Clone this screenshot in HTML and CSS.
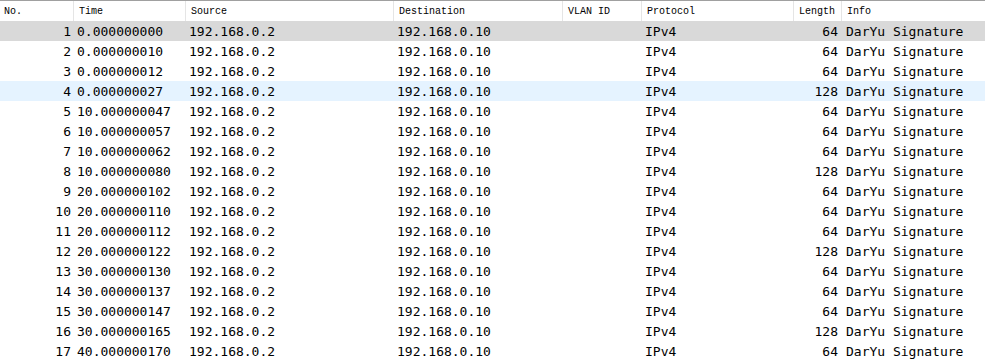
FILE: index.html
```html
<!DOCTYPE html>
<html lang="en">
<head>
    <meta charset="UTF-8">
    <title>Packet List</title>
    <link rel="stylesheet" href="styles.css">
</head>
<body>
    <div class="packet-list">
        <div class="row header">
            <div class="cell">No.</div>
            <div class="cell">Time</div>
            <div class="cell">Source</div>
            <div class="cell">Destination</div>
            <div class="cell">VLAN ID</div>
            <div class="cell">Protocol</div>
            <div class="cell">Length</div>
            <div class="cell">Info</div>
        </div>
        <div id="rows"></div>
    </div>
    <script src="app.js"></script>
</body>
</html>
```

FILE: styles.css
```css
body {
    margin: 0;
    background: #fff;
    color: #000;
}

.packet-list {
    width: 985px;
}

.row {
    display: grid;
    grid-template-columns: 73px 112px 208px 169px 79px 152px 48px 1fr;
    height: 20px;
    align-items: center;
    font-family: "DejaVu Sans Mono", "Liberation Mono", monospace;
    font-size: 13px;
    white-space: nowrap;
}

.row .cell {
    padding-left: 4px;
    overflow: hidden;
}

.row .num {
    text-align: right;
    padding-left: 0;
    padding-right: 2px;
}

.row .len {
    text-align: right;
    padding-left: 0;
    padding-right: 3px;
}

.row .info {
    padding-left: 5px;
}

.header {
    border-top: 1px solid #a0a0a0;
    height: 20px;
    align-items: stretch;
    font-family: "Liberation Mono", "DejaVu Sans Mono", monospace;
    font-size: 10px;
}

.header .cell {
    display: flex;
    align-items: center;
    padding-left: 5px;
    border-left: 1px solid #e5e5e5;
}

.header .cell:first-child {
    border-left: none;
    padding-left: 4px;
}

.selected {
    background: #d9d9d9;
}

.hover {
    background: #e5f3ff;
}
```

FILE: app.js
```js
const packets = [
    ['0.000000000', 64],
    ['0.000000010', 64],
    ['0.000000012', 64],
    ['0.000000027', 128],
    ['10.000000047', 64],
    ['10.000000057', 64],
    ['10.000000062', 64],
    ['10.000000080', 128],
    ['20.000000102', 64],
    ['20.000000110', 64],
    ['20.000000112', 64],
    ['20.000000122', 128],
    ['30.000000130', 64],
    ['30.000000137', 64],
    ['30.000000147', 64],
    ['30.000000165', 128],
    ['40.000000170', 64]
];

const rowsEl = document.getElementById('rows');

packets.forEach(([time, len], i) => {
    const row = document.createElement('div');
    row.className = 'row';
    if (i === 0) row.classList.add('selected');
    if (i === 3) row.classList.add('hover');
    row.innerHTML = `
        <div class="cell num">${i + 1}</div>
        <div class="cell">${time}</div>
        <div class="cell">192.168.0.2</div>
        <div class="cell">192.168.0.10</div>
        <div class="cell"></div>
        <div class="cell">IPv4</div>
        <div class="cell len">${len}</div>
        <div class="cell info">DarYu Signature</div>`;
    rowsEl.appendChild(row);
});
```
